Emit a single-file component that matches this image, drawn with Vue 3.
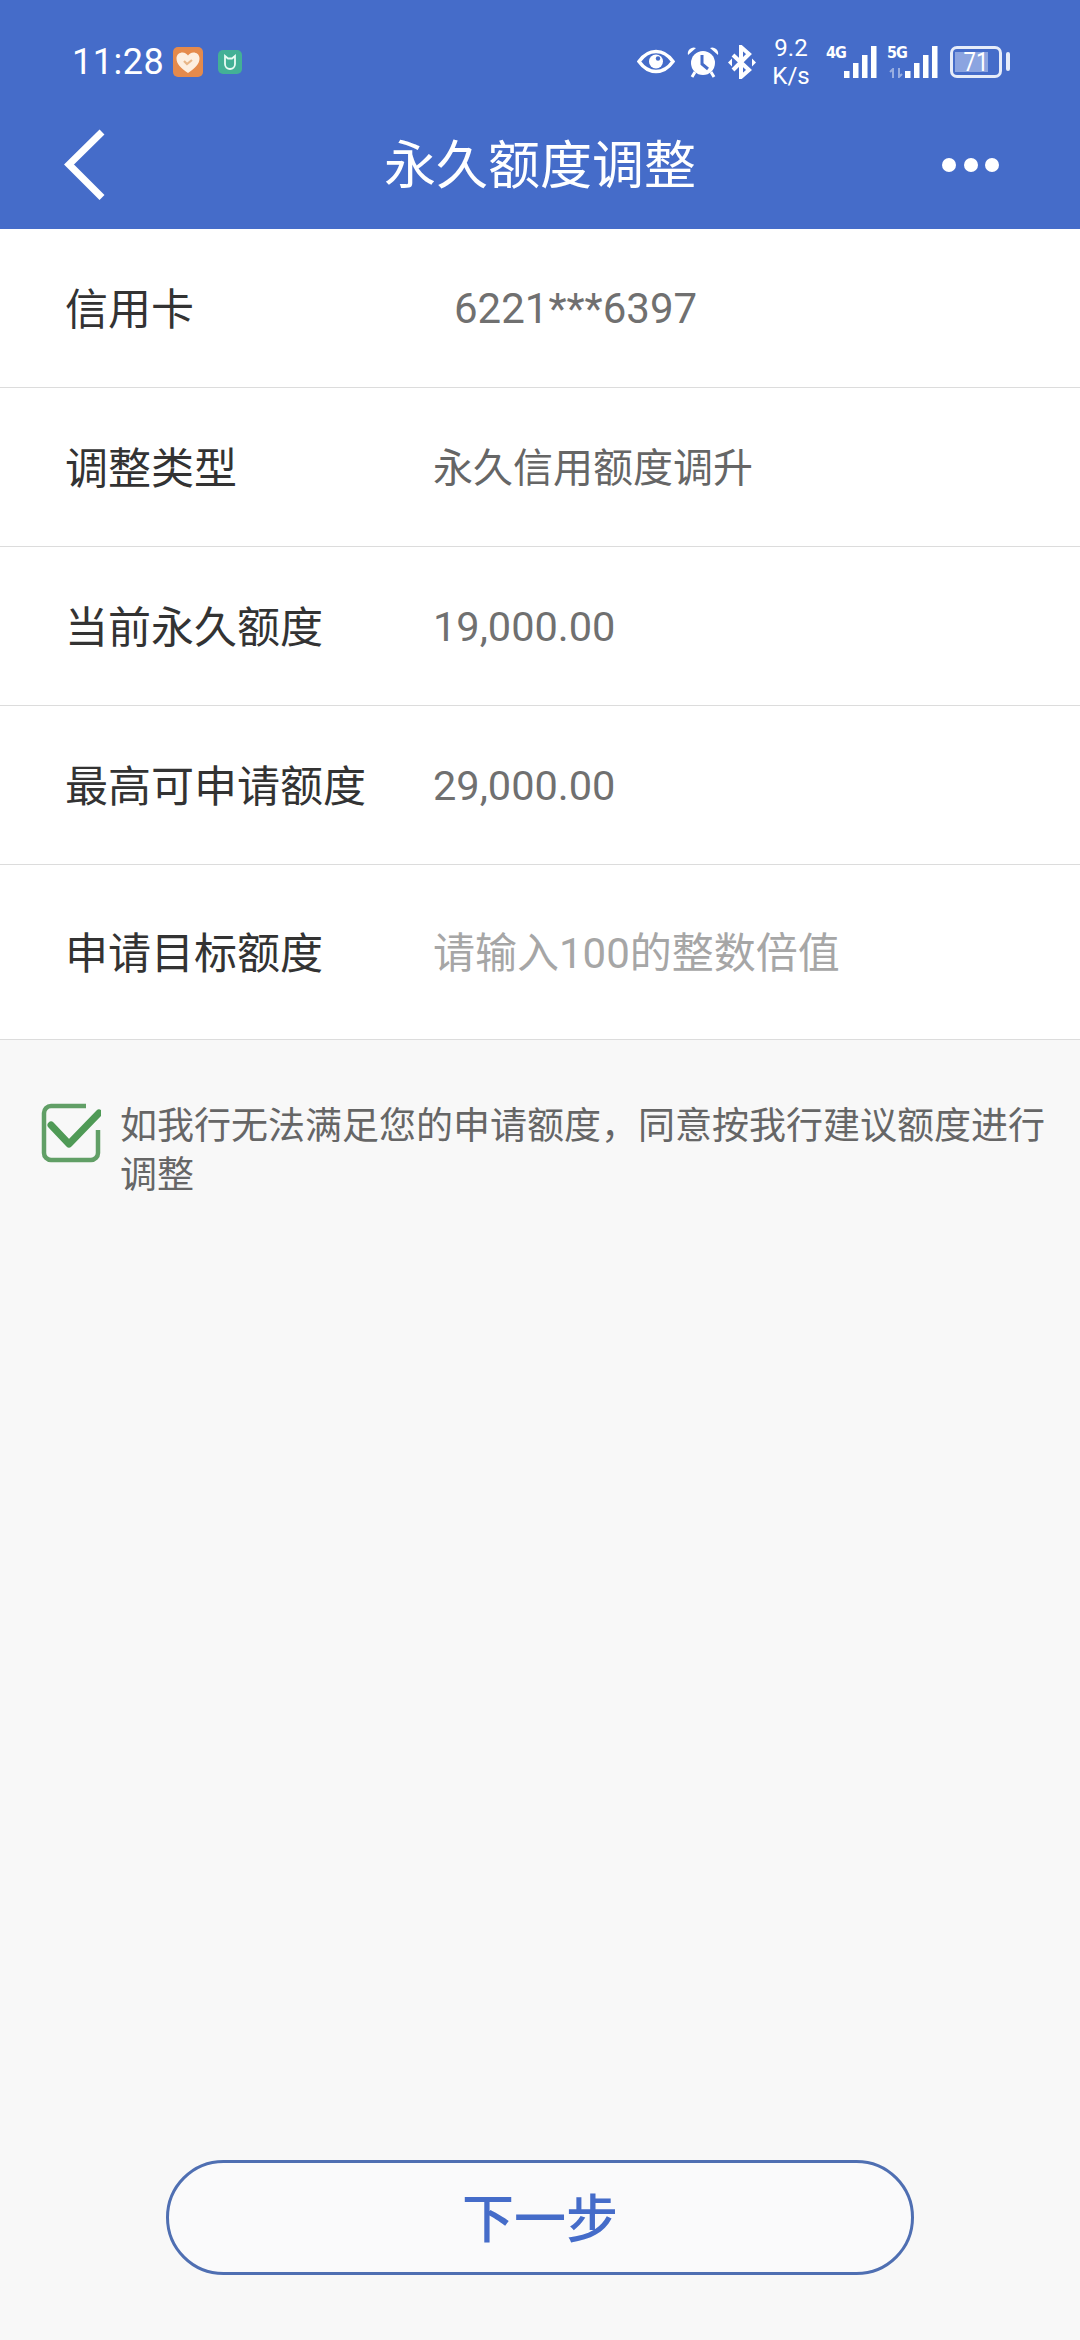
<script setup>
const rows = [
  { label: '信用卡', value: '6221***6397', cls: 'card' },
  { label: '调整类型', value: '永久信用额度调升', cls: 'cjk' },
  { label: '当前永久额度', value: '19,000.00', cls: 'num' },
  { label: '最高可申请额度', value: '29,000.00', cls: 'num' },
  { label: '申请目标额度', value: '请输入100的整数倍值', cls: 'ph' },
]
const bars = [
  { x: 0, h: 7 },
  { x: 9, h: 15 },
  { x: 18, h: 23 },
  { x: 27, h: 32 },
]
</script>

<template>
  <div class="page">
    <header class="head">
      <div class="status">
        <div class="st-left">
          <span class="time">11:28</span>
          <svg class="app1" viewBox="0 0 30 30"><rect width="30" height="30" rx="5" fill="#e58a4c"/><path d="M15 26C8 21 3.500 17 3.500 11.500C3.500 7.500 6.500 5.500 9.500 5.500C12 5.500 14 7 15 8.500C16 7 18 5.500 20.500 5.500C23.500 5.500 26.500 7.500 26.500 11.500C26.500 17 22 21 15 26Z" fill="#fdeee0"/><path d="M11 14l3 3 5-4" fill="none" stroke="#e8b587" stroke-width="2.200"/></svg>
          <svg class="app2" viewBox="0 0 24 24"><rect width="24" height="24" rx="5" fill="#43b096"/><path d="M7 6v8a5 5 0 0 0 10 0V6l-3 2.500h-4Z" fill="none" stroke="#e8fbf4" stroke-width="1.800"/></svg>
        </div>
        <div class="st-right">
          <svg class="eye" viewBox="0 0 38 25"><path d="M2 12.500C7 5.500 13 2.500 19 2.500s12 3 17 10c-5 7-11 10-17 10S7 19.500 2 12.500Z" fill="none" stroke="#fff" stroke-width="3.500"/><circle cx="19" cy="12.500" r="7" fill="#fff"/><circle cx="21" cy="9.500" r="2.200" fill="#456cc9"/></svg>
          <svg class="alarm" viewBox="0 0 32 32"><path d="M1 9a6 6 0 0 1 8-7ZM31 9a6 6 0 0 0-8-7Z" fill="#fff"/><path d="M8 26l-3 5M24 26l3 5" stroke="#fff" stroke-width="3"/><circle cx="16" cy="17" r="12" fill="#fff"/><path d="M15 9v9l6 5" fill="none" stroke="#456cc9" stroke-width="3"/></svg>
          <svg class="bt" viewBox="0 0 28 34"><path d="M5 10l16 15-8 7V2l8 7L5 25" fill="none" stroke="#fff" stroke-width="4"/><path d="M0 17.500l4-4v8ZM28 17.500l-4-4v8Z" fill="#fff"/></svg>
          <div class="speed"><span>9.2</span><span>K/s</span></div>
          <div class="sig">
            <span class="sig-t">4G</span>
            <svg class="bars" viewBox="0 0 33 32"><rect v-for="b in bars" :key="b.x" :x="b.x" :y="32 - b.h" width="5.500" :height="b.h" fill="#fff"/></svg>
          </div>
          <div class="sig second">
            <span class="sig-t">5G</span>
            <svg class="arrows" viewBox="0 0 14 10"><path d="M4 10V1L1 4M10 0v9l3-3" fill="none" stroke="#fff" stroke-width="2"/></svg>
            <svg class="bars" viewBox="0 0 33 32"><rect v-for="b in bars" :key="b.x" :x="b.x" :y="32 - b.h" width="5.500" :height="b.h" fill="#fff"/></svg>
          </div>
          <div class="batt"><div class="batt-box"><div class="batt-fill"></div><span class="batt-n">71</span></div><div class="batt-cap"></div></div>
        </div>
      </div>
      <div class="nav">
        <svg class="back" viewBox="0 0 42 72"><path d="M38 3L5 35.500l33 33" fill="none" stroke="#fff" stroke-width="7"/></svg>
        <div class="title">永久额度调整</div>
        <div class="more"><i></i><i></i><i></i></div>
      </div>
    </header>

    <section class="list">
      <div v-for="r in rows" :key="r.label" class="row" :class="r.cls">
        <div class="label">{{ r.label }}</div>
        <div class="value">{{ r.value }}</div>
      </div>
    </section>

    <div class="agree">
      <svg class="check" viewBox="0 0 60 60"><path d="M45 3H10a7 7 0 0 0-7 7v40a7 7 0 0 0 7 7h40a7 7 0 0 0 7-7V27" fill="none" stroke="#619f66" stroke-width="4.500"/><path d="M10 22l18 19L58 10" fill="none" stroke="#4f9a56" stroke-width="7" stroke-linecap="round" stroke-linejoin="round"/></svg>
      <p class="agree-t">如我行无法满足您的申请额度，同意按我行建议额度进行调整</p>
    </div>

    <div class="foot"><button class="next">下一步</button></div>
  </div>
</template>

<style>
html, body { margin: 0; background: #f8f8f8; }
</style>

<style scoped>
.page {
  width: 1080px; height: 2340px; display: flex; flex-direction: column;
  background: #f8f8f8; overflow: hidden;
  font-family: Roboto, "Noto Sans CJK SC", sans-serif;
}
.head { height: 229px; background: #456cc9; color: #fff; flex: none; }
.status { height: 118px; display: flex; justify-content: space-between; align-items: center; padding: 5px 70px 0 72px; box-sizing: border-box; }
.st-left { display: flex; align-items: center; }
.time { font-size: 36px; width: 101px; letter-spacing: .5px; }
.app1 { width: 30px; height: 30px; }
.app2 { width: 24px; height: 24px; margin-left: 15px; }
.st-right { display: flex; align-items: center; }
.eye { width: 38px; height: 25px; }
.alarm { width: 32px; height: 32px; margin-left: 12px; }
.bt { width: 28px; height: 34px; margin-left: 9px; }
.speed { display: flex; flex-direction: column; align-items: center; margin-left: 17px; font-size: 24px; line-height: 28px; width: 36px; }
.sig { display: flex; align-items: flex-end; position: relative; margin-left: 17px; height: 32px; }
.sig-t { font-size: 16px; font-weight: 700; line-height: 14px; align-self: flex-start; width: 18px; font-family: "DejaVu Sans Condensed", Roboto, sans-serif; letter-spacing: -1px; }
.second { margin-left: 10px; }
.arrows { position: absolute; left: 2px; bottom: 0; width: 14px; height: 10px; opacity: .45; }
.bars { width: 33px; height: 32px; }
.batt { display: flex; align-items: center; margin-left: 12px; }
.batt-box { position: relative; width: 52px; height: 32px; border: 3px solid #e6ecf9; border-radius: 7px; box-sizing: border-box; }
.batt-fill { position: absolute; left: 2px; top: 3px; bottom: 3px; width: 33px; background: #8ba4e0; }
.batt-n { position: absolute; inset: 0; text-align: center; font-size: 26px; line-height: 26px; transform: scaleX(.85); }
.batt-cap { width: 4px; height: 19px; background: #e6ecf9; border-radius: 2px; margin-left: 4px; }
.nav { height: 111px; display: flex; align-items: center; justify-content: space-between; padding: 0 81px 17px 64px; box-sizing: border-box; position: relative; }
.back { width: 42px; height: 72px; }
.title { position: absolute; left: 0; right: 0; top: 0; text-align: center; font-size: 52px; line-height: 98px; }
.more { display: flex; gap: 7.500px; }
.more i { width: 14px; height: 14px; border-radius: 50%; background: #fff; }
.list { background: #fff; flex: none; }
.row { height: 159px; display: flex; align-items: center; padding-left: 65px; border-bottom: 1px solid #dcdcdc; box-sizing: border-box; }
.row.ph { height: 175px; }
.label { width: 368px; font-size: 43px; color: #333; padding-bottom: 5px; }
.value { font-size: 40px; color: #666; }
.card .value { margin-left: 21px; font-size: 42px; color: #707070; }
.num .value { font-size: 41.500px; color: #707070; }
.cjk .value { padding-bottom: 5px; }
.ph .value { color: #a6a6a6; font-size: 42px; padding-bottom: 5px; }
.agree { display: flex; padding: 63px 32px 0 41px; }
.check { width: 60px; height: 60px; flex: none; }
.agree-t { margin: -1px 0 0 19px; font-size: 37px; line-height: 49px; color: #666; }
.foot { margin-top: auto; padding-bottom: 65px; display: flex; justify-content: center; }
.next { width: 748px; height: 115px; border: 3px solid #4f6fb2; border-radius: 58px; background: #fafafb; color: #456cc9; font-size: 52px; font-weight: 500; font-family: inherit; padding: 0 0 4px; }
</style>
